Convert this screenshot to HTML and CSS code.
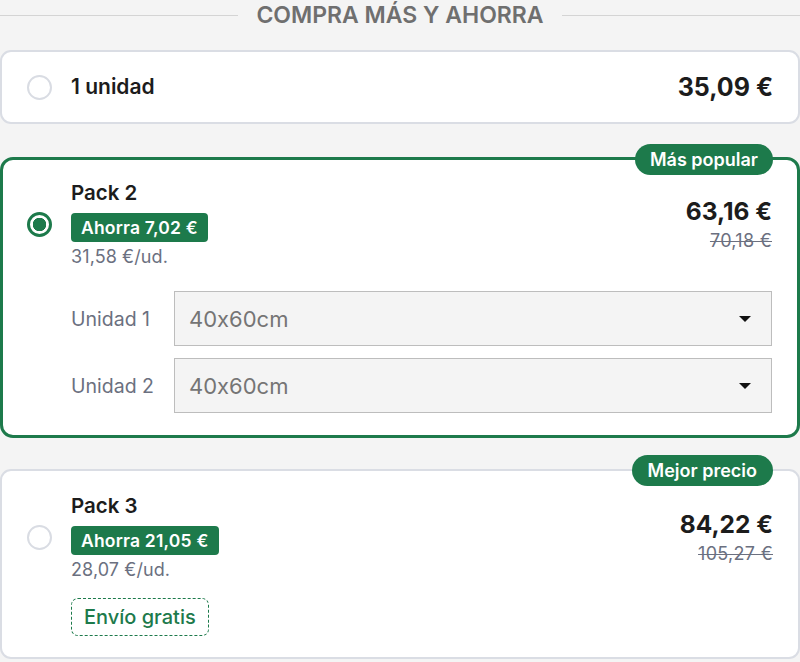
FILE: index.html
```html
<!DOCTYPE html>
<html lang="es">
<head>
<meta charset="utf-8">
<title>Compra más y ahorra</title>
<link rel="stylesheet" href="styles.css">
</head>
<body>
<div class="wrap">
  <div class="heading"><span class="heading-line"></span><h2>COMPRA MÁS Y AHORRA</h2><span class="heading-line"></span></div>

  <div class="card card-single">
    <div class="top-row">
      <span class="radio"></span>
      <div class="info"><div class="title">1 unidad</div></div>
      <div class="prices"><div class="price">35,09 €</div></div>
    </div>
  </div>

  <div class="card card-selected">
    <span class="tag">Más popular</span>
    <div class="top-row">
      <span class="radio radio-on"></span>
      <div class="info">
        <div class="title">Pack 2</div>
        <span class="save">Ahorra 7,02 €</span>
        <div class="per">31,58 €/ud.</div>
      </div>
      <div class="prices">
        <div class="price">63,16 €</div>
        <div class="old">70,18 €</div>
      </div>
    </div>
    <div class="variants">
      <div class="variant">
        <span class="variant-label">Unidad 1</span>
        <div class="select"><span>40x60cm</span><span class="caret"></span></div>
      </div>
      <div class="variant">
        <span class="variant-label">Unidad 2</span>
        <div class="select"><span>40x60cm</span><span class="caret"></span></div>
      </div>
    </div>
  </div>

  <div class="card card-best">
    <span class="tag">Mejor precio</span>
    <div class="top-row">
      <span class="radio"></span>
      <div class="info">
        <div class="title">Pack 3</div>
        <span class="save">Ahorra 21,05 €</span>
        <div class="per">28,07 €/ud.</div>
      </div>
      <div class="prices">
        <div class="price">84,22 €</div>
        <div class="old">105,27 €</div>
      </div>
    </div>
    <div class="extras"><span class="shipping">Envío gratis</span></div>
  </div>
</div>
</body>
</html>
```
FILE: styles.css
```css
* { box-sizing: border-box; }
html, body { margin: 0; padding: 0; }
body {
  background: #f4f4f4;
  font-family: Inter, "Noto Sans", "Liberation Sans", sans-serif;
  font-feature-settings: "calt" 0;
  color: #1c1c1c;
}
.wrap {
  width: 800px;
  display: flex;
  flex-direction: column;
}
.heading {
  display: flex;
  align-items: center;
  gap: 18px;
  height: 31px;
}
.heading-line {
  flex: 1;
  height: 1px;
  background: #d4d4d4;
}
.heading h2 {
  margin: 0;
  font-size: 23px;
  font-weight: 600;
  color: #6f6f6f;
  letter-spacing: 0;
  line-height: 31px;
}
.card {
  position: relative;
  background: #fff;
  border: 2px solid #dadde4;
  border-radius: 11px;
  padding: 0 25px 0 25px;
}
.card-single {
  margin-top: 19px;
  height: 74px;
  display: flex;
  align-items: center;
}
.card-single .top-row { width: 100%; }
.card-single .title { font-size: 21px; }
.card-single .price { font-size: 25px; }
.card-selected {
  margin-top: 33px;
  border: 3px solid #1d7a4b;
  border-radius: 13px;
  padding: 20px 25px 22px 24px;
}
.card-best {
  margin-top: 31px;
  padding: 22px 25px 21px 25px;
}
.top-row {
  display: flex;
  align-items: center;
}
.radio {
  flex: none;
  width: 25px;
  height: 25px;
  border: 2.5px solid #d9dce3;
  border-radius: 50%;
  margin-right: 19px;
  background: #fff;
}
.radio-on {
  border: 3px solid #1d7a4b;
  background: radial-gradient(circle, #1d7a4b 0 6.5px, #fff 7px);
}
.info {
  flex: 1;
  display: flex;
  flex-direction: column;
  align-items: flex-start;
}
.title {
  font-size: 20.5px;
  font-weight: 600;
  line-height: 26px;
  letter-spacing: 0;
}
.save {
  margin-top: 7px;
  background: #1d7a4b;
  color: #fff;
  font-size: 17.5px;
  font-weight: 600;
  line-height: 29px;
  padding: 0 10px;
  border-radius: 4px;
  letter-spacing: 0.2px;
}
.per {
  margin-top: 4px;
  font-size: 18px;
  line-height: 22px;
  color: #6b7080;
  letter-spacing: 0.1px;
}
.prices {
  text-align: right;
}
.price {
  font-size: 24.5px;
  font-weight: 700;
  line-height: 30px;
  letter-spacing: 0;
}
.old {
  margin-top: 4px;
  font-size: 18px;
  line-height: 22px;
  color: #6b7080;
  text-decoration: line-through;
  text-decoration-thickness: 1px;
  letter-spacing: 0.3px;
}
.variants {
  margin-top: 23px;
  padding-left: 44px;
  display: flex;
  flex-direction: column;
  gap: 12px;
}
.variant {
  display: flex;
  align-items: center;
}
.variant-label {
  width: 103px;
  font-size: 19.5px;
  color: #6b7080;
}
.select {
  flex: 1;
  height: 55px;
  background: #f4f4f4;
  border: 1.5px solid #bdbdbd;
  display: flex;
  align-items: center;
  justify-content: space-between;
  padding: 0 20px 0 14px;
  font-size: 22px;
  color: #757575;
}
.caret {
  width: 0;
  height: 0;
  border-left: 6px solid transparent;
  border-right: 6px solid transparent;
  border-top: 6px solid #111;
}
.extras {
  padding-left: 44px;
  margin-top: 17px;
  display: flex;
}
.shipping {
  border: 1.5px dashed #1d7a4b;
  border-radius: 7px;
  color: #1d7a4b;
  font-size: 20px;
  font-weight: 500;
  line-height: 36px;
  padding: 0 12px;
}
.tag {
  position: absolute;
  top: -16px;
  right: 24px;
  background: #1d7a4b;
  color: #fff;
  font-size: 18px;
  font-weight: 600;
  line-height: 31px;
  padding: 0 15px;
  border-radius: 16px;
}
.card-best .tag { right: 25px; top: -16px; padding: 0 16px; }
```
